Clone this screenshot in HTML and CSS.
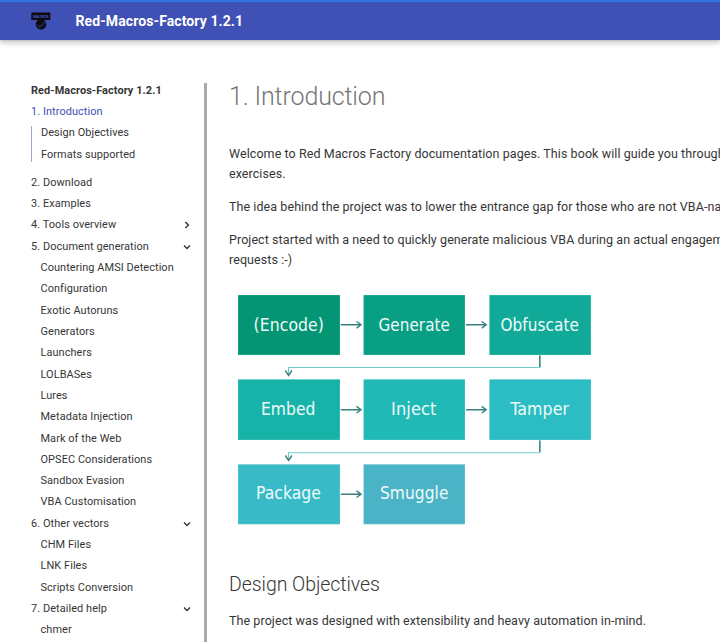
FILE: index.html
```html
<!DOCTYPE html>
<html lang="en">
<head>
<meta charset="utf-8">
<title>1. Introduction - Red-Macros-Factory 1.2.1</title>
<link rel="stylesheet" href="styles.css">
</head>
<body>
<header class="header">
  <svg class="logo" viewBox="0 0 20 18" aria-hidden="true">
    <rect x="0.3" y="0.5" width="19" height="7.6" rx="0.6" fill="#0b0b12"/>
    <text class="logo-text" x="9.8" y="6" text-anchor="middle" textLength="16" fill="#4051b5">MACROS</text>
    <circle cx="10" cy="12.3" r="5.3" fill="#0b0b12"/>
    <path d="M6 12.2l2.8 2.2 5.4-5.2M6.6 14.2l2.2 1.4 6-5.2" fill="none" stroke="#4051b5" stroke-width="0.5"/>
  </svg>
  <span class="header-title">Red-Macros-Factory 1.2.1</span>
</header>
<div class="page">
  <nav class="sidebar">
    <div class="nav-title">Red-Macros-Factory 1.2.1</div>
    <a class="nav-item active">1. Introduction</a>
    <div class="toc">
      <a class="nav-item">Design Objectives</a>
      <a class="nav-item">Formats supported</a>
    </div>
    <a class="nav-item">2. Download</a>
    <a class="nav-item">3. Examples</a>
    <a class="nav-item">4. Tools overview<svg class="chevron" viewBox="0 0 8 8"><path d="M2.4 1l3 3-3 3"/></svg></a>
    <a class="nav-item">5. Document generation<svg class="chevron" viewBox="0 0 8 8"><path d="M1 2.6l3 3 3-3"/></svg></a>
    <div class="nested">
      <a class="nav-item">Countering AMSI Detection</a>
      <a class="nav-item">Configuration</a>
      <a class="nav-item">Exotic Autoruns</a>
      <a class="nav-item">Generators</a>
      <a class="nav-item">Launchers</a>
      <a class="nav-item">LOLBASes</a>
      <a class="nav-item">Lures</a>
      <a class="nav-item">Metadata Injection</a>
      <a class="nav-item">Mark of the Web</a>
      <a class="nav-item">OPSEC Considerations</a>
      <a class="nav-item">Sandbox Evasion</a>
      <a class="nav-item">VBA Customisation</a>
    </div>
    <a class="nav-item">6. Other vectors<svg class="chevron" viewBox="0 0 8 8"><path d="M1 2.6l3 3 3-3"/></svg></a>
    <div class="nested">
      <a class="nav-item">CHM Files</a>
      <a class="nav-item">LNK Files</a>
      <a class="nav-item">Scripts Conversion</a>
    </div>
    <a class="nav-item">7. Detailed help<svg class="chevron" viewBox="0 0 8 8"><path d="M1 2.6l3 3 3-3"/></svg></a>
    <div class="nested">
      <a class="nav-item">chmer</a>
    </div>
  </nav>
  <div class="scrollbar"></div>
  <main class="content">
    <h1>1. Introduction</h1>
    <p>Welcome to Red Macros Factory documentation pages. This book will guide you through<br>exercises.</p>
    <p>The idea behind the project was to lower the entrance gap for those who are not VBA-na</p>
    <p>Project started with a need to quickly generate malicious VBA during an actual engagem<br>requests :-)</p>
    <svg class="diagram" viewBox="0 0 353 230" role="img">
      <g class="boxes">
        <rect x="0" y="0" width="102" height="60" fill="#039574"/>
        <rect x="125.5" y="0" width="101.5" height="60" fill="#099f85"/>
        <rect x="251.3" y="0" width="101.7" height="60" fill="#11aa98"/>
        <rect x="0" y="84.3" width="102" height="60.7" fill="#18b3a8"/>
        <rect x="125.5" y="84.3" width="101.5" height="60.7" fill="#21b9b6"/>
        <rect x="251.3" y="84.3" width="101.7" height="60.7" fill="#2bbdc3"/>
        <rect x="0" y="169.3" width="102" height="60" fill="#38bac7"/>
        <rect x="125.5" y="169.3" width="101.5" height="60" fill="#4ab3c6"/>
      </g>
      <g class="labels">
        <text x="15.5" y="35.5" textLength="70.5" lengthAdjust="spacingAndGlyphs">(Encode)</text>
        <text x="140.5" y="35.5" textLength="71.5" lengthAdjust="spacingAndGlyphs">Generate</text>
        <text x="262.5" y="35.5" textLength="78.5" lengthAdjust="spacingAndGlyphs">Obfuscate</text>
        <text x="23" y="120" textLength="54.5" lengthAdjust="spacingAndGlyphs">Embed</text>
        <text x="153" y="120" textLength="45.5" lengthAdjust="spacingAndGlyphs">Inject</text>
        <text x="272.5" y="120" textLength="58.5" lengthAdjust="spacingAndGlyphs">Tamper</text>
        <text x="18" y="204.2" textLength="65" lengthAdjust="spacingAndGlyphs">Package</text>
        <text x="142" y="204.2" textLength="68.5" lengthAdjust="spacingAndGlyphs">Smuggle</text>
      </g>
      <g class="lines">
        <path d="M302 60.5v12H50.5v7M302 145.5v12.2H50.5v7"/>
      </g>
      <g class="arrows">
        <path d="M301.8 60.5V72M301.8 145.5V157"/>
        <path d="M102.8 29.8h20m-4.3-3.3l4.5 3.3-4.5 3.3M228 29.8h20m-4.3-3.3l4.5 3.3-4.5 3.3"/>
        <path d="M102.8 114.7h20m-4.3-3.3l4.5 3.3-4.5 3.3M228 114.7h20m-4.3-3.3l4.5 3.3-4.5 3.3"/>
        <path d="M102.8 199.2h20m-4.3-3.3l4.5 3.3-4.5 3.3"/>
        <path d="M47.3 75.5l3.3 5 3.3-5M47.3 160.5l3.3 5 3.3-5"/>
      </g>
    </svg>
    <h2>Design Objectives</h2>
    <p>The project was designed with extensibility and heavy automation in-mind.</p>
  </main>
</div>
</body>
</html>
```
FILE: styles.css
```css
* { box-sizing: border-box; }
body {
  margin: 0;
  height: 642px;
  overflow: hidden;
  background: #fff;
  color: #363636;
  font-family: Roboto, sans-serif;
}
.header {
  display: flex;
  align-items: center;
  height: 40px;
  padding: 0 0 0 31px;
  background: #4051b5;
  border-top: 2px solid #3273dc;
  box-shadow: 0 0 3px rgba(0,0,0,.2), 0 3px 6px rgba(0,0,0,.2);
}
.logo { width: 20px; height: 18px; }
.logo-text { font: bold 4.4px "Liberation Sans", sans-serif; }
.header-title {
  margin-left: 24.5px;
  color: #fff;
  font-size: 14.06px;
  font-weight: 700;
  line-height: 20px;
  letter-spacing: .08px;
}
.page { display: flex; padding-top: 42.5px; }
.sidebar {
  flex: none;
  width: 192px;
  margin-right: 12px;
  padding: 1px 0 0 31px;
  font-size: 10.94px;
  line-height: 14px;
  letter-spacing: .07px;
  white-space: nowrap;
}
.nav-title { height: 17.9px; font-weight: 700; }
.nav-item {
  display: flex;
  justify-content: space-between;
  align-items: center;
  height: 21.33px;
}
.active { color: #4051b5; }
.toc {
  display: flow-root;
  height: 35.5px;
  margin: 3.5px 0 10.2px;
  padding-left: 9px;
  border-left: 1px solid #a0a8da;
}
.toc .nav-item:first-child { margin-top: -3.5px; }
.nested { padding-left: 9.5px; }
.chevron { width: 8px; height: 8px; margin-right: 1px; }
.chevron path { fill: none; stroke: #333; stroke-width: 1.4; }
.scrollbar { flex: none; width: 3px; height: 560px; background: #aaa; }
.content {
  flex: 1;
  min-width: 0;
  padding: .5px 0 0 22px;
  overflow: hidden;
  font-size: 12.5px;
  line-height: 20px;
  letter-spacing: .075px;
  white-space: nowrap;
}
h1 {
  margin: -3px 0 30px;
  color: #757575;
  font-size: 25px;
  font-weight: 300;
  line-height: 34px;
  letter-spacing: -.15px;
}
p { margin: 0 0 13px; }
.diagram {
  display: block;
  width: 353px;
  height: 230px;
  margin: 25px 0 0 9px;
}
.boxes rect { stroke: #fff; stroke-opacity: .2; stroke-width: 1; }
.labels text { fill: #effbfa; font: 17px "DejaVu Sans Condensed", "DejaVu Sans", sans-serif; font-stretch: condensed; }
.lines path { fill: none; stroke: #72cecb; stroke-width: 1.1; }
.arrows path { fill: none; stroke: #397f80; stroke-width: 1.4; }
h2 {
  margin: 46px 0 12px;
  font-size: 19.5px;
  font-weight: 300;
  line-height: 28px;
  letter-spacing: -.06px;
}
```
